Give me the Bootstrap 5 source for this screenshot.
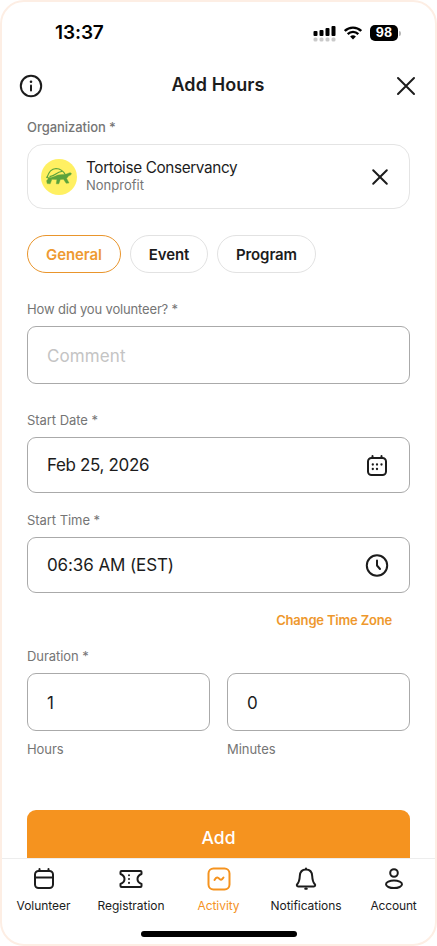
<!DOCTYPE html>
<html lang="en">
<head>
<meta charset="utf-8">
<meta name="viewport" content="width=device-width, initial-scale=1">
<title>Add Hours</title>
<link href="https://cdn.jsdelivr.net/npm/bootstrap@5.3.0/dist/css/bootstrap.min.css" rel="stylesheet">
<style>
:root{--ink:#1c1c1c;--muted:#757575;--orange:#f5931f}
body{font-family:Inter,"Liberation Sans",sans-serif;color:var(--ink);background:#fff;overflow:hidden}
svg{display:block;flex:none;fill:none;stroke:currentColor;stroke-width:2;stroke-linecap:round;stroke-linejoin:round}
.phone{width:437px;height:946px;border:2px solid #fdeee4;border-radius:24px}
.status{height:62px;padding:0 34px 0 53px;color:#000}
.clock{font-size:19px;font-weight:600;line-height:24px;letter-spacing:-.1px}
.battery{width:28px;height:16px;border-radius:5px;background:#000;color:#fff;font-size:12.5px;font-weight:700;line-height:16px}
.battery-tip{width:2px;height:5px;border-radius:0 2px 2px 0;background:#b8b8b8;margin-left:1px}
.top{height:40px;padding:0 19px 0 17px;margin-top:2px}
.title{font-size:18px;font-weight:600;line-height:24px;margin:-3px 3px 0 0;letter-spacing:.1px}
.form-area{padding:0 25px}
.lbl{font-size:13px;line-height:20px;color:var(--muted);display:block;letter-spacing:-.05px}
.l-org{margin-top:11px}
.org{height:65px;border:1.5px solid #e4e4e4;border-radius:16px;padding:0 19px 0 13px;margin-top:7px}
.org-text{margin-left:9px}
.org-name{font-size:15.3px;line-height:18px;letter-spacing:-.36px}
.org-kind{font-size:13px;line-height:17px;color:var(--muted)}
.choices{gap:9px;margin-top:26px}
.choice{height:38px;border:1px solid #e2e2e2;border-radius:19px;font-size:15px;font-weight:600;line-height:1;padding:0;color:var(--ink);letter-spacing:-.1px}
.choice.on,.choice.on:hover{border-color:#e9952c;color:#ee9a32}
.w-gen{width:94px}.w-evt{width:78px}.w-prg{width:99px}
.l-how,.l-date{margin-top:26px}
.l-how{letter-spacing:-.16px}
.l-time{margin-top:17px}
.l-dur{margin-top:16px}
.field{height:56px;border:1px solid #aaa;border-radius:9px;padding:1px 19px 0;font-size:17px;margin-top:7px;background:#fff;color:var(--ink)}
.field.tall{height:58px;padding-top:2px}
.duo{gap:17px}
.l-unit{margin-top:8px}
.field::placeholder{color:#c4c4c4;opacity:1;letter-spacing:.1px}
.s-date{letter-spacing:-.35px;padding-top:1px}
.s-time{letter-spacing:-.1px;padding-top:1px}
.zone{font-size:13px;font-weight:600;line-height:20px;color:#ee982d;text-decoration:none;margin:17px 18px 0 0;letter-spacing:-.18px}
.add-btn{height:48px;border-radius:9px 9px 0 0;background:var(--orange);color:#fff;font-size:17.5px;font-weight:500;border:0;padding:9px 0 0;margin-top:51px}
.tabs{height:86px;border-top:1px solid #ededed}
.tab{height:56px;padding-top:7px;font-size:12px;line-height:18px;color:var(--ink);text-decoration:none;letter-spacing:-.05px}
.tab svg{margin-bottom:5px}
.tab.on{color:var(--orange)}
.t1,.t3,.t5{width:83px}.t2,.t4{width:92px}
.t5{letter-spacing:-.15px}
.homebar{width:156px;height:6px;border-radius:3px;background:#000;margin-top:16px}
</style>
<script src="https://cdn.jsdelivr.net/npm/bootstrap@5.3.0/dist/js/bootstrap.bundle.min.js"></script>
</head>
<body>
<div class="phone d-flex flex-column">
  <div class="status d-flex align-items-center justify-content-between">
    <span class="clock">13:37</span>
    <div class="d-flex align-items-center">
      <svg width="23" height="17" viewBox="0 0 23 17"><g fill="#000" stroke="none"><rect x=".5" y="6" width="4" height="5" rx="1"/><rect x="6.500" y="5" width="4" height="6" rx="1"/><rect x="12.500" y="3" width="4" height="8" rx="1"/><rect x="18.500" y="1" width="4" height="10" rx="1"/></g><g fill="#c9c9c9" stroke="none"><rect x=".5" y="12.500" width="4" height="4" rx="1.500"/><rect x="6.500" y="12.500" width="4" height="4" rx="1.500"/><rect x="12.500" y="12.500" width="4" height="4" rx="1.500"/><rect x="18.500" y="12.500" width="4" height="4" rx="1.500"/></g></svg>
      <svg class="ms-2 me-2" width="18" height="14" viewBox="0 0 18 14"><g stroke="#000" stroke-width="2.400" stroke-linecap="butt"><path d="M.8 5A11.600 11.600 0 0 1 17.200 5M3.700 8.100a7.500 7.500 0 0 1 10.600 0"/></g><path d="M6.100 10.600a4.100 4.100 0 0 1 5.800 0L9 13.600z" fill="#000" stroke="none"/></svg>
      <span class="battery text-center">98</span><span class="battery-tip"></span>
    </div>
  </div>
  <header class="top d-flex align-items-center justify-content-between">
    <svg width="24" height="24" viewBox="0 0 24 24"><circle cx="12" cy="12" r="10.200"/><path d="M12 11.500v5"/><circle cx="12" cy="7.800" r="1.300" fill="currentColor" stroke="none"/></svg>
    <h1 class="title">Add Hours</h1>
    <svg width="20" height="20" viewBox="0 0 20 20"><path d="M2 2l16 16M18 2L2 18"/></svg>
  </header>
  <form class="form-area flex-grow-1 overflow-hidden">
    <span class="lbl l-org fw-medium">Organization *</span>
    <div class="org d-flex align-items-center">
      <svg width="36" height="36" viewBox="0 0 36 36"><circle cx="18" cy="18" r="18" fill="#fff062" stroke="none"/><g stroke="#5ca33c" stroke-width="1.200"><path d="M6 18.500C7.500 13.500 11 9.800 15 9.500c4 .3 7.500 2.500 9.300 6.300M9 17.300c4.500.5 6.500-4.300 11.500-4.800"/><path d="M5.500 18.200c4 1 6.500 0 9-1.200 3-1.400 6-1.400 9.500-1.400l3-1.200c1.400-.8 3.200-.7 3.400.2.200 1.200-1.600 2-3 2.300-.7 1.600-1.900 2.300-1.900 2.300l2.500 4.800-2.800.3-2.700-4-3.200.2-1.500 4.300h-2.500l.6-4.300-5-.2-1.700 4.500-3-.2-.6-2.800 1.700-2z" fill="#5ca33c" stroke-width=".4"/></g></svg>
      <div class="flex-grow-1 org-text"><div class="org-name">Tortoise Conservancy</div><div class="org-kind">Nonprofit</div></div>
      <svg width="20" height="20" viewBox="0 0 20 20"><path d="M3.200 3.200l13.600 13.600M16.800 3.200L3.200 16.800"/></svg>
    </div>
    <div class="d-flex choices">
      <button type="button" class="btn choice on w-gen">General</button>
      <button type="button" class="btn choice w-evt">Event</button>
      <button type="button" class="btn choice w-prg">Program</button>
    </div>
    <label class="lbl l-how" for="how">How did you volunteer? *</label>
    <input class="form-control field tall" id="how" placeholder="Comment">
    <span class="lbl l-date">Start Date *</span>
    <div class="field d-flex align-items-center justify-content-between"><span class="s-date">Feb 25, 2026</span>
      <svg width="26" height="24" viewBox="0 0 26 24"><rect x="4" y="4" width="18" height="17" rx="3.500"/><path d="M8.500 2v2M17.500 2v2"/><g fill="currentColor" stroke="none"><circle cx="8.800" cy="10.500" r="1.150"/><circle cx="13" cy="10.500" r="1.150"/><circle cx="17.500" cy="10.500" r="1.150"/><circle cx="8.800" cy="15" r="1.150"/><circle cx="13" cy="15" r="1.150"/></g></svg>
    </div>
    <span class="lbl l-time">Start Time *</span>
    <div class="field d-flex align-items-center justify-content-between"><span class="s-time">06:36 AM (EST)</span>
      <svg width="26" height="24" viewBox="0 0 26 24"><circle cx="13" cy="11.500" r="10.200"/><path d="M13 6.500v5l3 3.500"/></svg>
    </div>
    <div class="d-flex justify-content-end"><a href="#" class="zone">Change Time Zone</a></div>
    <span class="lbl l-dur">Duration *</span>
    <div class="d-flex duo">
      <div class="flex-fill"><input class="form-control field tall" value="1" aria-label="Hours"><span class="lbl l-unit">Hours</span></div>
      <div class="flex-fill"><input class="form-control field tall" value="0" aria-label="Minutes"><span class="lbl l-unit">Minutes</span></div>
    </div>
    <button type="button" class="btn add-btn w-100">Add</button>
  </form>
  <nav class="tabs">
    <div class="d-flex text-center">
      <a href="#" class="tab t1 d-flex flex-column align-items-center"><svg width="26" height="26" viewBox="0 0 26 26"><rect x="4" y="5" width="18" height="17" rx="3.500"/><path d="M4 11.500h18M8.500 3v2M17.500 3v2"/></svg>Volunteer</a>
      <a href="#" class="tab t2 d-flex flex-column align-items-center"><svg width="26" height="26" viewBox="0 0 26 26"><path d="M3.500 5h19Q23.500 5 23.500 6v2C21 9 19.500 10.500 19.500 13s1.500 4 4 5v2q0 1-1 1h-19q-1 0-1-1v-2C5 17 6.500 15.500 6.500 13S5 9 2.500 8V6q0-1 1-1z"/><path d="M11 9.200v.1M11 13v.1M11 16.800v.1"/></svg>Registration</a>
      <a href="#" class="tab t3 on d-flex flex-column align-items-center"><svg width="26" height="26" viewBox="0 0 26 26"><rect x="2.500" y="2.500" width="21" height="21" rx="5"/><path d="M8.500 14c2-3.500 3.500-2.800 4.700-1.300s2.300 1.800 4.300-1.200"/></svg>Activity</a>
      <a href="#" class="tab t4 d-flex flex-column align-items-center"><svg width="26" height="26" viewBox="0 0 26 26"><path d="M13 3.500c-4.200 0-6 3-6.200 6.500-.2 4-1 6.500-2.600 8.200-.8 1-.3 2.300 1 2.300h15.600c1.300 0 1.800-1.300 1-2.300-1.600-1.700-2.400-4.200-2.600-8.200-.2-3.500-2-6.500-6.200-6.500zM13 2.500v1M12.200 22.800h1.600"/></svg>Notifications</a>
      <a href="#" class="tab t5 d-flex flex-column align-items-center"><svg width="26" height="26" viewBox="0 0 26 26"><circle cx="13" cy="7" r="3.800"/><ellipse cx="13" cy="18.300" rx="8" ry="3.800"/></svg>Account</a>
    </div>
    <div class="homebar mx-auto"></div>
  </nav>
</div>
</body>
</html>
